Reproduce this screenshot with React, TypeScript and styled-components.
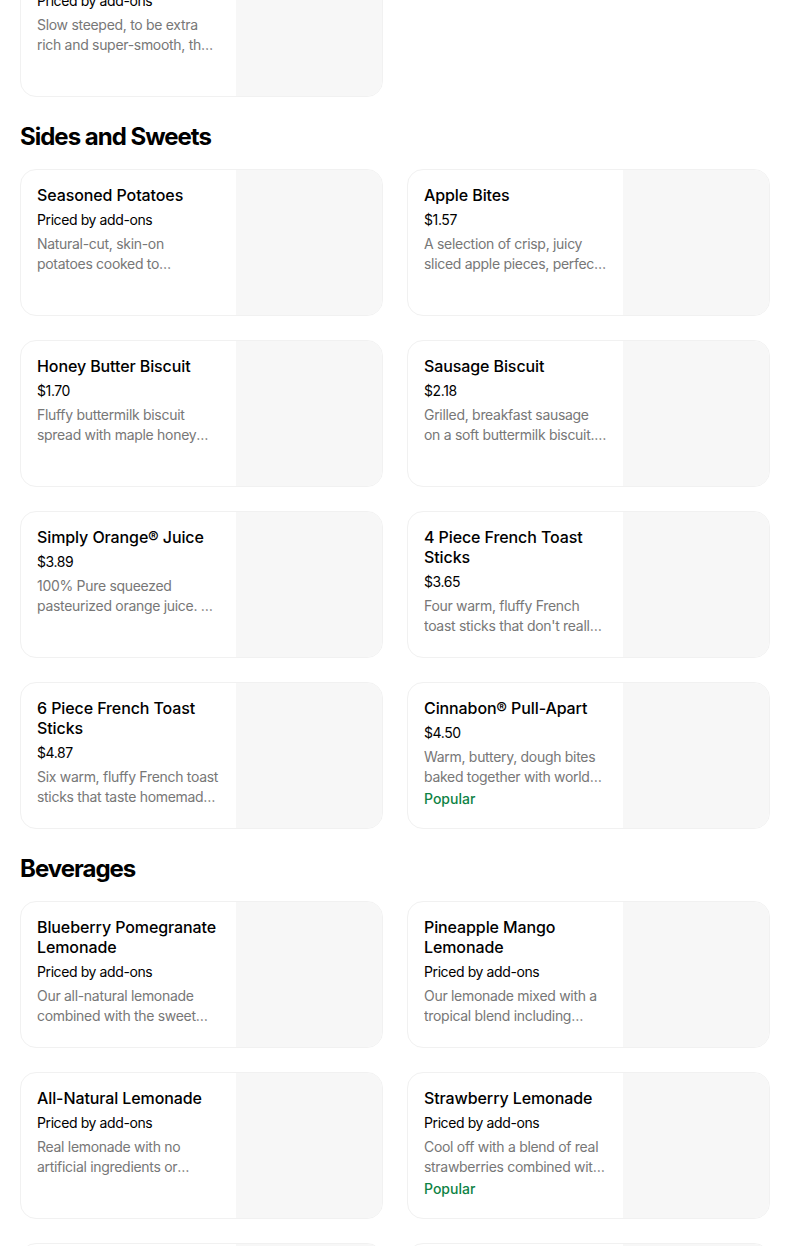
import React from 'react';
import styled, { createGlobalStyle } from 'styled-components';

const GlobalStyle = createGlobalStyle`
  body {
    margin: 0;
    background: #fff;
    font-family: 'Inter', 'Liberation Sans', sans-serif;
    color: #000;
    overflow: hidden;
  }
`;

const Page = styled.div`
  width: 750px;
  padding: 0 20px;
  margin-top: -50px;
`;

const SectionTitle = styled.h2`
  margin: 24px 0 16px;
  font-size: 24px;
  line-height: 32px;
  font-weight: 700;
  letter-spacing: -1px;
`;

const Grid = styled.div`
  display: grid;
  grid-template-columns: 1fr 1fr;
  gap: 24px;
`;

const Card = styled.div`
  display: flex;
  height: 147px;
  box-sizing: border-box;
  border: 1px solid #f1f1f1;
  border-radius: 16px;
  overflow: hidden;
  background: #fff;
`;

const Info = styled.div`
  flex: 1;
  min-width: 0;
  padding: 15px 16px;
  display: flex;
  flex-direction: column;
`;

const Name = styled.div`
  font-size: 16px;
  line-height: 20px;
  font-weight: 500;
  letter-spacing: -0.1px;
`;

const Price = styled.div`
  margin-top: 5px;
  font-size: 14px;
  line-height: 20px;
  letter-spacing: -0.4px;
  color: #000;
`;

const Desc = styled.div`
  margin-top: 4px;
  font-size: 14px;
  line-height: 20px;
  letter-spacing: -0.3px;
  color: #777;
  display: -webkit-box;
  -webkit-line-clamp: 2;
  -webkit-box-orient: vertical;
  overflow: hidden;
`;

const Tag = styled.div`
  margin-top: 2px;
  font-size: 14px;
  line-height: 20px;
  font-weight: 500;
  color: #0e8345;
`;

const Thumb = styled.div`
  width: 146px;
  flex-shrink: 0;
  background: #f7f7f7;
`;

type Item = { name: string; price: string; desc: string; popular?: boolean };

const prev: Item[] = [
  {
    name: 'Cold Brew Iced Coffee',
    price: 'Priced by add-ons',
    desc: 'Slow steeped, to be extra rich and super-smooth, then finished with your choice of flavor.',
  },
];

const sides: Item[] = [
  {
    name: 'Seasoned Potatoes',
    price: 'Priced by add-ons',
    desc: 'Natural-cut, skin-on potatoes cooked to perfection and seasoned.',
  },
  {
    name: 'Apple Bites',
    price: '$1.57',
    desc: 'A selection of crisp, juicy sliced apple pieces, perfect for a snack.',
  },
  {
    name: 'Honey Butter Biscuit',
    price: '$1.70',
    desc: 'Fluffy buttermilk biscuit spread with maple honey butter.',
  },
  {
    name: 'Sausage Biscuit',
    price: '$2.18',
    desc: 'Grilled, breakfast sausage on a soft buttermilk biscuit. Simple and good.',
  },
  {
    name: 'Simply Orange® Juice',
    price: '$3.89',
    desc: '100% Pure squeezed pasteurized orange juice. A refreshing classic.',
  },
  {
    name: '4 Piece French Toast Sticks',
    price: '$3.65',
    desc: "Four warm, fluffy French toast sticks that don't really need syrup.",
  },
  {
    name: '6 Piece French Toast Sticks',
    price: '$4.87',
    desc: 'Six warm, fluffy French toast sticks that taste homemade every time.',
  },
  {
    name: 'Cinnabon® Pull-Apart',
    price: '$4.50',
    desc: 'Warm, buttery, dough bites baked together with world-famous cinnamon.',
    popular: true,
  },
];

const drinks: Item[] = [
  {
    name: 'Blueberry Pomegranate Lemonade',
    price: 'Priced by add-ons',
    desc: 'Our all-natural lemonade combined with the sweet taste of blueberry.',
  },
  {
    name: 'Pineapple Mango Lemonade',
    price: 'Priced by add-ons',
    desc: 'Our lemonade mixed with a tropical blend including pineapple and mango.',
  },
  {
    name: 'All-Natural Lemonade',
    price: 'Priced by add-ons',
    desc: 'Real lemonade with no artificial ingredients or preservatives.',
  },
  {
    name: 'Strawberry Lemonade',
    price: 'Priced by add-ons',
    desc: 'Cool off with a blend of real strawberries combined with lemonade.',
    popular: true,
  },
  { name: 'Lemonade', price: 'Priced by add-ons', desc: '' },
  { name: 'Iced Tea', price: 'Priced by add-ons', desc: '' },
];

const MenuCard = ({ item }: { item: Item }) => (
  <Card>
    <Info>
      <Name>{item.name}</Name>
      <Price>{item.price}</Price>
      {item.desc && <Desc>{item.desc}</Desc>}
      {item.popular && <Tag>Popular</Tag>}
    </Info>
    <Thumb />
  </Card>
);

const Section = ({ title, items }: { title?: string; items: Item[] }) => (
  <section>
    {title && <SectionTitle>{title}</SectionTitle>}
    <Grid>
      {items.map((item) => (
        <MenuCard key={item.name} item={item} />
      ))}
    </Grid>
  </section>
);

const App = () => (
  <>
    <GlobalStyle />
    <Page>
      <Section items={prev} />
      <Section title="Sides and Sweets" items={sides} />
      <Section title="Beverages" items={drinks} />
    </Page>
  </>
);

export default App;
